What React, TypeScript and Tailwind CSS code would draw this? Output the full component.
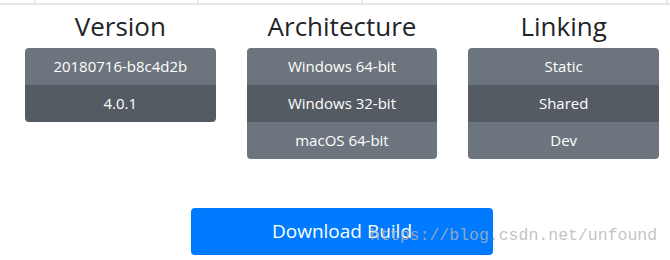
import React from 'react';

const columns = [
  { title: 'Version', items: ['20180716-b8c4d2b', '4.0.1'], active: 1 },
  { title: 'Architecture', items: ['Windows 64-bit', 'Windows 32-bit', 'macOS 64-bit'], active: 1 },
  { title: 'Linking', items: ['Static', 'Shared', 'Dev'], active: 1 },
];

const ButtonGroup = ({ items, active }: { items: string[]; active: number }) => (
  <div className="flex flex-col rounded overflow-hidden">
    {items.map((item, i) => (
      <div
        key={item}
        className={`h-[37px] flex items-center justify-center text-white text-[15px] ${
          i === active ? 'bg-[#545b62]' : 'bg-[#6c757d]'
        }`}
      >
        {item}
      </div>
    ))}
  </div>
);

export default function App() {
  return (
    <div className="relative w-[670px] h-[260px] bg-white overflow-hidden" style={{ fontFamily: '"Open Sans", "Noto Sans", sans-serif' }}>
      <div className="h-[5px] flex border-b-2 border-[#e6e6e6]">
        <div className="w-[36px] border-r-2 border-[#ececec]"></div>
        <div className="w-[163px] border-r-2 border-[#ececec]"></div>
        <div className="w-[164px] border-r-2 border-[#ececec]"></div>
        <div className="w-[305px] border-r-2 border-[#e6e6e6]"></div>
      </div>

      <div className="grid grid-cols-3 gap-[31px] ml-[25px] w-[634px]">
        {columns.map((col) => (
          <div key={col.title} className="flex flex-col">
            <h2 className="text-[26px] leading-[43px] text-center text-[#212529]">{col.title}</h2>
            <ButtonGroup items={col.items} active={col.active} />
          </div>
        ))}
      </div>

      <div className="flex mt-[49px] ml-[191px]">
        <button className="w-[302px] h-[47px] rounded bg-[#007bff] text-white text-[19px]">Download Build</button>
      </div>

      <div
        className="absolute left-[370px] top-[224px] text-[16.5px] text-[#b4b4b4]/80 pointer-events-none"
        style={{ fontFamily: '"Liberation Mono", monospace' }}
      >
        https://blog.csdn.net/unfound
      </div>
    </div>
  );
}
